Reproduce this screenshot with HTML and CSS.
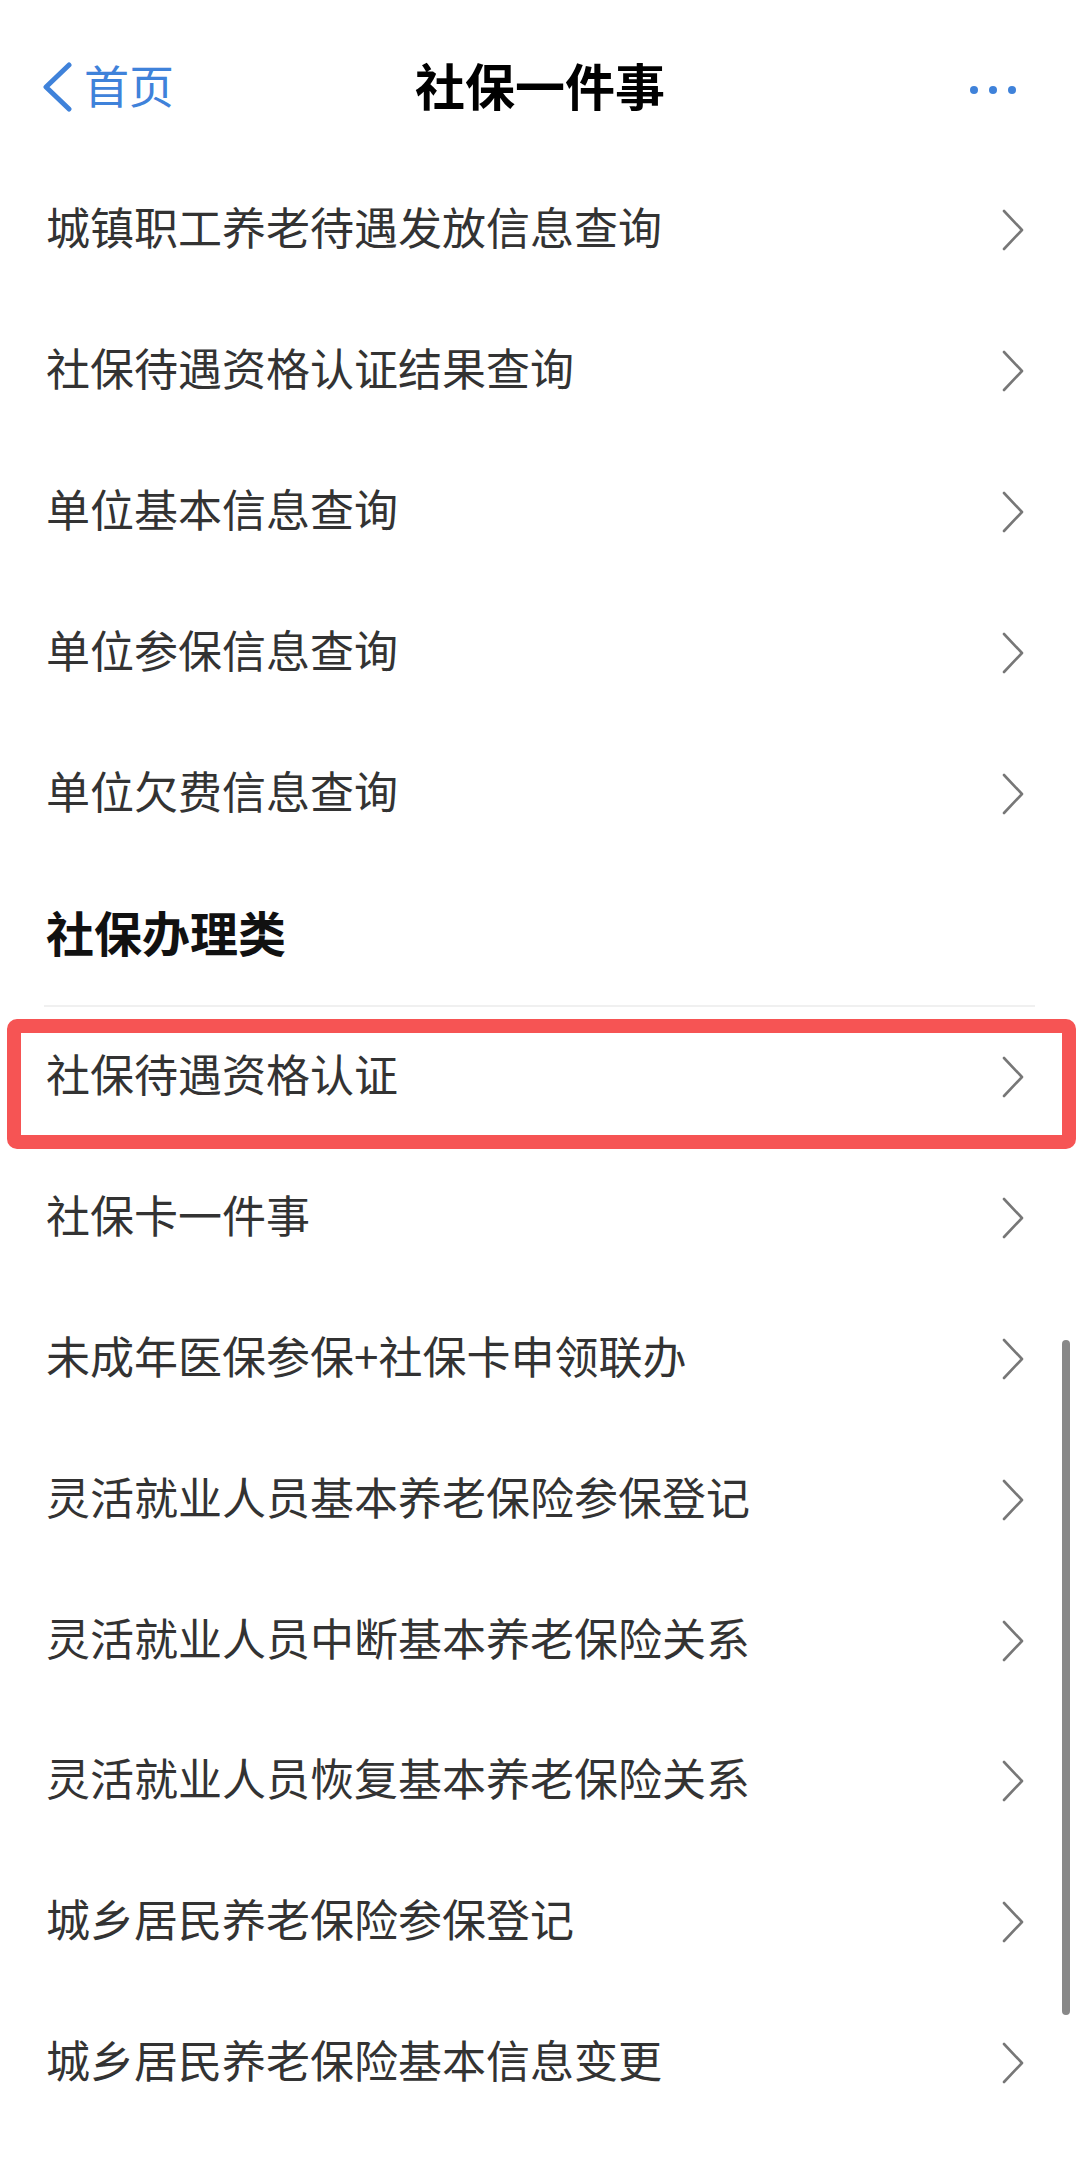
FILE: index.html
```html
<!DOCTYPE html>
<html lang="zh-CN">
<head>
<meta charset="utf-8">
<title>社保一件事</title>
<link rel="stylesheet" href="styles.css">
</head>
<body>
<div class="page">
  <header class="nav">
    <div class="back">
      <svg class="back-icon" width="34" height="50" viewBox="0 0 34 50"><polyline points="29,3 6,25 29,47" fill="none" stroke="#3f82da" stroke-width="5" stroke-linecap="round" stroke-linejoin="round"/></svg>
      <span class="back-text">首页</span>
    </div>
    <div class="title">社保一件事</div>
    <div class="more"><span class="dot"></span><span class="dot"></span><span class="dot"></span></div>
  </header>

  <ul class="list">
    <li class="row"><span class="label">城镇职工养老待遇发放信息查询</span><svg class="chev" width="24" height="42" viewBox="0 0 24 42"><polyline points="3,2 21,21 3,40" fill="none" stroke="#777" stroke-width="2.6" stroke-linecap="round" stroke-linejoin="round"/></svg></li>
    <li class="row"><span class="label">社保待遇资格认证结果查询</span><svg class="chev" width="24" height="42" viewBox="0 0 24 42"><polyline points="3,2 21,21 3,40" fill="none" stroke="#777" stroke-width="2.6" stroke-linecap="round" stroke-linejoin="round"/></svg></li>
    <li class="row"><span class="label">单位基本信息查询</span><svg class="chev" width="24" height="42" viewBox="0 0 24 42"><polyline points="3,2 21,21 3,40" fill="none" stroke="#777" stroke-width="2.6" stroke-linecap="round" stroke-linejoin="round"/></svg></li>
    <li class="row"><span class="label">单位参保信息查询</span><svg class="chev" width="24" height="42" viewBox="0 0 24 42"><polyline points="3,2 21,21 3,40" fill="none" stroke="#777" stroke-width="2.6" stroke-linecap="round" stroke-linejoin="round"/></svg></li>
    <li class="row"><span class="label">单位欠费信息查询</span><svg class="chev" width="24" height="42" viewBox="0 0 24 42"><polyline points="3,2 21,21 3,40" fill="none" stroke="#777" stroke-width="2.6" stroke-linecap="round" stroke-linejoin="round"/></svg></li>
  </ul>

  <div class="section"><h2 class="section-title">社保办理类</h2></div>

  <ul class="list">
    <li class="row hl"><span class="label">社保待遇资格认证</span><svg class="chev" width="24" height="42" viewBox="0 0 24 42"><polyline points="3,2 21,21 3,40" fill="none" stroke="#777" stroke-width="2.6" stroke-linecap="round" stroke-linejoin="round"/></svg></li>
    <li class="row"><span class="label">社保卡一件事</span><svg class="chev" width="24" height="42" viewBox="0 0 24 42"><polyline points="3,2 21,21 3,40" fill="none" stroke="#777" stroke-width="2.6" stroke-linecap="round" stroke-linejoin="round"/></svg></li>
    <li class="row"><span class="label">未成年医保参保+社保卡申领联办</span><svg class="chev" width="24" height="42" viewBox="0 0 24 42"><polyline points="3,2 21,21 3,40" fill="none" stroke="#777" stroke-width="2.6" stroke-linecap="round" stroke-linejoin="round"/></svg></li>
    <li class="row"><span class="label">灵活就业人员基本养老保险参保登记</span><svg class="chev" width="24" height="42" viewBox="0 0 24 42"><polyline points="3,2 21,21 3,40" fill="none" stroke="#777" stroke-width="2.6" stroke-linecap="round" stroke-linejoin="round"/></svg></li>
    <li class="row"><span class="label">灵活就业人员中断基本养老保险关系</span><svg class="chev" width="24" height="42" viewBox="0 0 24 42"><polyline points="3,2 21,21 3,40" fill="none" stroke="#777" stroke-width="2.6" stroke-linecap="round" stroke-linejoin="round"/></svg></li>
    <li class="row"><span class="label">灵活就业人员恢复基本养老保险关系</span><svg class="chev" width="24" height="42" viewBox="0 0 24 42"><polyline points="3,2 21,21 3,40" fill="none" stroke="#777" stroke-width="2.6" stroke-linecap="round" stroke-linejoin="round"/></svg></li>
    <li class="row"><span class="label">城乡居民养老保险参保登记</span><svg class="chev" width="24" height="42" viewBox="0 0 24 42"><polyline points="3,2 21,21 3,40" fill="none" stroke="#777" stroke-width="2.6" stroke-linecap="round" stroke-linejoin="round"/></svg></li>
    <li class="row"><span class="label">城乡居民养老保险基本信息变更</span><svg class="chev" width="24" height="42" viewBox="0 0 24 42"><polyline points="3,2 21,21 3,40" fill="none" stroke="#777" stroke-width="2.6" stroke-linecap="round" stroke-linejoin="round"/></svg></li>
  </ul>

  <div class="scrollbar"></div>
</div>
</body>
</html>
```

FILE: styles.css
```css
* { box-sizing: border-box; }
html, body {
  margin: 0;
  padding: 0;
  background: #ffffff;
}
body {
  font-family: "Noto Sans CJK SC", "Noto Sans", sans-serif;
  color: #333333;
  width: 1080px;
  height: 2173px;
  overflow: hidden;
}
.page {
  position: relative;
  width: 1080px;
  height: 2173px;
}
.nav {
  height: 160px;
  padding: 8px 56px 0 40px;
  display: flex;
  align-items: center;
  justify-content: space-between;
}
.back {
  display: flex;
  align-items: center;
  gap: 10px;
  color: #3f82da;
  width: 220px;
}
.back-icon { display: block; margin-top: 6px; }
.back-text {
  font-size: 45px;
  line-height: 1;
}
.title {
  font-size: 50px;
  font-weight: 700;
  color: #000000;
  line-height: 1;
  margin-left: 16px;
}
.more {
  width: 220px;
  display: flex;
  justify-content: flex-end;
  gap: 11px;
  padding-right: 8px;
  padding-top: 12px;
}
.dot {
  width: 8px;
  height: 8px;
  border-radius: 50%;
  background: #3f82da;
}
.list {
  list-style: none;
  margin: 0;
  padding: 0;
}
.row {
  height: 140.8px;
  padding: 0 55px 0 46px;
  display: flex;
  align-items: center;
  justify-content: space-between;
  position: relative;
}
.label {
  font-size: 44px;
  line-height: 1;
  color: #333333;
  padding-bottom: 8px;
}
.chev { display: block; }
.section {
  height: 143px;
  margin: 0 45px 0 44px;
  border-bottom: 2px solid #f0f0f0;
  display: flex;
  align-items: center;
  padding-bottom: 6px;
}
.section-title {
  margin: 0;
  padding-left: 2px;
  font-size: 48px;
  font-weight: 700;
  color: #111111;
  line-height: 1;
}
.hl::after {
  content: "";
  position: absolute;
  top: 12px;
  bottom: -1px;
  left: 7px;
  right: 4px;
  border: 14px solid #f65454;
  border-radius: 10px;
}
.scrollbar {
  position: absolute;
  left: 1062px;
  top: 1340px;
  width: 8px;
  height: 675px;
  border-radius: 4px;
  background: #888888;
}
```
